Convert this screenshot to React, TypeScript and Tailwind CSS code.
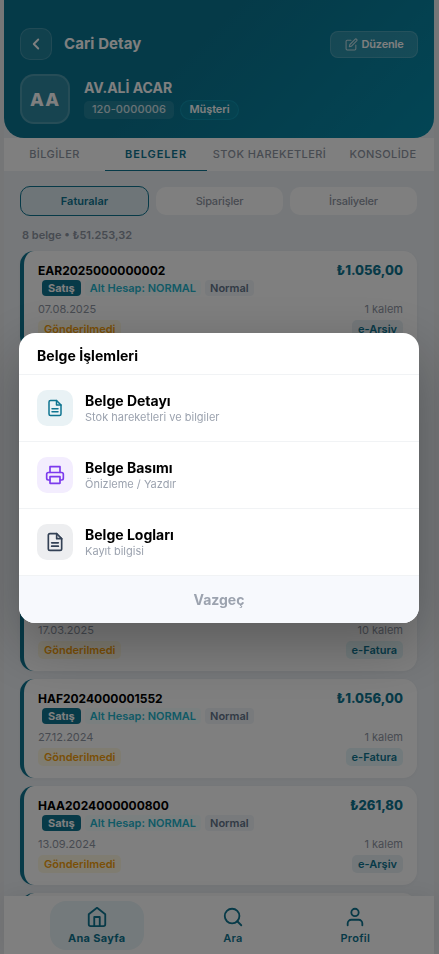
import type { ReactNode } from "react"
import clsx from "clsx"

type Doc = {
    no: string
    total: string
    date: string
    items: string
    kind: string
}

const docs: Doc[] = [
    { no: "EAR2025000000002", total: "₺1.056,00", date: "07.08.2025", items: "1 kalem", kind: "e-Arşiv" },
    { no: "HAF2025000000418", total: "₺4.820,00", date: "22.05.2025", items: "3 kalem", kind: "e-Fatura" },
    { no: "HAF2025000000307", total: "₺2.640,00", date: "14.04.2025", items: "2 kalem", kind: "e-Fatura" },
    { no: "HAF2025000000251", total: "₺9.150,00", date: "17.03.2025", items: "10 kalem", kind: "e-Fatura" },
    { no: "HAF2024000001552", total: "₺1.056,00", date: "27.12.2024", items: "1 kalem", kind: "e-Fatura" },
    { no: "HAA2024000000800", total: "₺261,80", date: "13.09.2024", items: "1 kalem", kind: "e-Arşiv" },
    { no: "HAA2024000000655", total: "₺740,00", date: "02.08.2024", items: "1 kalem", kind: "e-Arşiv" },
]

const Icon = ({ children, size = 20, width = 2 }: { children: ReactNode; size?: number; width?: number }) => (
    <svg width={size} height={size} viewBox="0 0 24 24" fill="none" stroke="currentColor" strokeWidth={width} strokeLinecap="round" strokeLinejoin="round">
        {children}
    </svg>
)

const FileIcon = ({ size }: { size: number }) => (
    <Icon size={size}>
        <path d="M14 2H6a2 2 0 0 0-2 2v16a2 2 0 0 0 2 2h12a2 2 0 0 0 2-2V8z" />
        <path d="M14 2v6h6" />
        <path d="M16 13H8" />
        <path d="M16 17H8" />
    </Icon>
)

const Header = () => (
    <header className="h-[138px] shrink-0 rounded-b-[20px] bg-linear-135 from-[#0a7490] from-40% to-[#068baa] px-4 pt-7 text-white">
        <div className="flex items-center">
            <button className="flex size-8 items-center justify-center rounded-[10px] border border-white/15 bg-white/10">
                <Icon size={18} width={2.5}><path d="M15 18l-6-6 6-6" /></Icon>
            </button>
            <h1 className="ml-3 flex-1 pt-px text-[15px] font-bold tracking-[0.1px]">Cari Detay</h1>
            <button className="flex h-[27px] w-[88px] items-center justify-center gap-1 rounded-lg border border-white/15 bg-white/15 text-[11px] font-semibold tracking-[-0.2px]">
                <span className="opacity-70">
                    <Icon size={13}>
                        <path d="M11 4H4a2 2 0 0 0-2 2v14a2 2 0 0 0 2 2h14a2 2 0 0 0 2-2v-7" />
                        <path d="M18.5 2.5a2.121 2.121 0 0 1 3 3L12 15l-4 1 1-4 9.500-9.500z" />
                    </Icon>
                </span>
                Düzenle
            </button>
        </div>
        <div className="mt-3.5 flex items-center gap-3.5">
            <div className="flex size-[50px] items-center justify-center rounded-[14px] border-2 border-white/15 bg-white/15 text-[18px] font-extrabold tracking-[1px]">AA</div>
            <div>
                <div className="text-[14px] leading-[18px] font-bold">AV.ALİ ACAR</div>
                <div className="mt-[3px] flex items-center gap-1.5">
                    <span className="flex h-[18px] w-[90px] items-center justify-center rounded-[5px] bg-white/10 text-[11px] font-medium tracking-[0.1px] text-white/80">120-0000006</span>
                    <span className="flex h-5 w-[59px] items-center justify-center rounded-full border border-[#22d3ee]/20 bg-[#22d3ee]/10 text-[11px] font-semibold tracking-[-0.1px]">Müşteri</span>
                </div>
            </div>
        </div>
    </header>
)

const Tabs = () => (
    <nav className="flex h-[33px] shrink-0 bg-white text-[11px] font-medium tracking-[0.4px] text-[#8f96a3]">
        <span className="flex w-[101px] items-center justify-center">BİLGİLER</span>
        <span className="flex w-[102px] items-center justify-center border-b border-[#0e7490] pt-px font-semibold tracking-[0.9px] text-[#0e7490]">BELGELER</span>
        <span className="flex flex-1 items-center justify-center whitespace-nowrap">STOK HAREKETLERİ</span>
        <span className="flex w-[102px] items-center justify-center">KONSOLİDE</span>
    </nav>
)

const DocCard = ({ doc }: { doc: Doc }) => (
    <article className="h-[99px] shrink-0 rounded-[14px] border-l-4 border-[#0e7490] bg-white py-3 pr-3.5 pl-3.5 shadow-[0_1px_4px_rgba(0,0,0,0.04)]">
        <div className="flex h-[15px] items-center justify-between">
            <span className="text-[12px] font-bold text-black">{doc.no}</span>
            <span className="text-[13px] font-extrabold text-[#0e7490]">{doc.total}</span>
        </div>
        <div className="mt-0.5 ml-1 flex h-4 gap-1 text-[11px] leading-4">
            <span className="rounded bg-[#0e7490] px-1.5 font-bold text-white">Satış</span>
            <span className="rounded bg-[#ecfeff]/60 px-[5px] font-semibold text-[#22b4cc]">Alt Hesap: NORMAL</span>
            <span className="rounded bg-[#f1f5f9] px-[5px] font-semibold text-[#64748b]">Normal</span>
        </div>
        <div className="mt-1.5 flex justify-between text-[11px] leading-[14px] text-[#8f96a3]">
            <span>{doc.date}</span>
            <span>{doc.items}</span>
        </div>
        <div className="mt-1 flex justify-between text-[11px] leading-[18px] font-semibold">
            <span className="rounded-[5px] bg-[#fef3c7]/50 px-1.5 text-[#f59e0b]">Gönderilmedi</span>
            <span className={clsx("rounded-[5px] px-1.5 text-[#0e7490]", doc.kind === "e-Fatura" ? "bg-[#e4f5f8]" : "bg-[#e9f1f5]")}>{doc.kind}</span>
        </div>
    </article>
)

const BottomNav = () => (
    <nav className="flex h-[58px] shrink-0 items-center justify-around bg-white px-4 text-[11px] leading-[14px] font-semibold tracking-[0.3px] text-[#0e7490] shadow-[0_-4px_20px_rgba(0,0,0,0.06)]">
        <a className="flex h-[49px] w-[94px] flex-col items-center gap-[3px] rounded-2xl bg-[#e9f4f8] pt-[5px] font-bold">
            <Icon size={22}>
                <path d="M3 9l9-7 9 7v11a2 2 0 0 1-2 2H5a2 2 0 0 1-2-2z" />
                <path d="M9 22V12h6v10" />
            </Icon>
            Ana Sayfa
        </a>
        <a className="flex h-[49px] w-[60px] flex-col items-center gap-[3px] pt-[5px]">
            <Icon size={22}>
                <circle cx="11" cy="11" r="8" />
                <path d="M21 21l-4.350-4.350" />
            </Icon>
            Ara
        </a>
        <a className="flex h-[49px] w-[66px] flex-col items-center gap-[3px] pt-[5px]">
            <Icon size={22}>
                <path d="M20 21v-2a4 4 0 0 0-4-4H8a4 4 0 0 0-4 4v2" />
                <circle cx="12" cy="7" r="4" />
            </Icon>
            Profil
        </a>
    </nav>
)

type ActionProps = { icon: ReactNode; tone: string; title: string; text: string }

const Action = ({ icon, tone, title, text }: ActionProps) => (
    <button className="flex h-[67px] w-full items-center gap-3 border-t border-[#f1f3f5] px-[18px] text-left">
        <span className={clsx("flex size-9 items-center justify-center rounded-[10px]", tone)}>{icon}</span>
        <span className="flex flex-col">
            <span className="text-[14px] leading-[17px] font-bold text-black">{title}</span>
            <span className="pt-px text-[11px] leading-[15px] text-[#9ca3af]">{text}</span>
        </span>
    </button>
)

const ActionDialog = () => (
    <div className="fixed inset-0 flex items-center justify-center bg-black/50 pt-0.5">
        <div className="mr-px w-[400px] overflow-hidden rounded-2xl bg-white shadow-[0_20px_60px_rgba(0,0,0,0.3)]">
            <h2 className="flex h-[41px] items-center px-[18px] pt-1 text-[14px] font-bold tracking-[0.05px] text-black">Belge İşlemleri</h2>
            <Action icon={<FileIcon size={18} />} tone="bg-[#e9f2f5] text-[#0e7490]" title="Belge Detayı" text="Stok hareketleri ve bilgiler" />
            <Action
                icon={
                    <Icon size={20}>
                        <path d="M6 9V2h12v7" />
                        <path d="M6 18H4a2 2 0 0 1-2-2v-5a2 2 0 0 1 2-2h16a2 2 0 0 1 2 2v5a2 2 0 0 1-2 2h-2" />
                        <path d="M6 14h12v8H6z" />
                    </Icon>
                }
                tone="bg-[#f3edfe] text-[#7c3aed]"
                title="Belge Basımı"
                text="Önizleme / Yazdır"
            />
            <Action icon={<FileIcon size={20} />} tone="bg-[#edeef0] text-[#334155]" title="Belge Logları" text="Kayıt bilgisi" />
            <button className="h-12 w-full border-t border-[#f1f3f5] bg-[#f7f9fd] text-[14px] font-bold text-[#9ca3af]">Vazgeç</button>
        </div>
    </div>
)

export default function App() {
    return (
        <div className="flex h-[954px] justify-center overflow-hidden bg-[#eaecef] pr-px font-['Inter',sans-serif]">
            <div className="flex w-[430px] flex-col bg-[#edf1f5]">
                <Header />
                <Tabs />
                <main className="flex min-h-0 flex-1 flex-col overflow-hidden pt-[15px] pr-[17px] pl-4">
                    <div className="flex shrink-0 items-center gap-[7px] text-[11px] font-medium tracking-[-0.2px] text-[#8f96a3]">
                        <button className="h-[30px] w-[129px] rounded-[10px] border border-[#0e7490] bg-[#dcebf0] font-semibold tracking-normal text-[#0e7490]">Faturalar</button>
                        <button className="h-7 flex-1 rounded-[10px] bg-white">Siparişler</button>
                        <button className="h-7 flex-1 rounded-[10px] bg-white">İrsaliyeler</button>
                    </div>
                    <p className="mt-[11px] mb-2 ml-0.5 shrink-0 text-[11px] leading-4 font-semibold text-[#8f96a3]">8 belge • ₺51.253,32</p>
                    <div className="flex flex-col gap-2">
                        {docs.map((doc) => <DocCard key={doc.no} doc={doc} />)}
                    </div>
                </main>
                <BottomNav />
            </div>
            <ActionDialog />
        </div>
    )
}
